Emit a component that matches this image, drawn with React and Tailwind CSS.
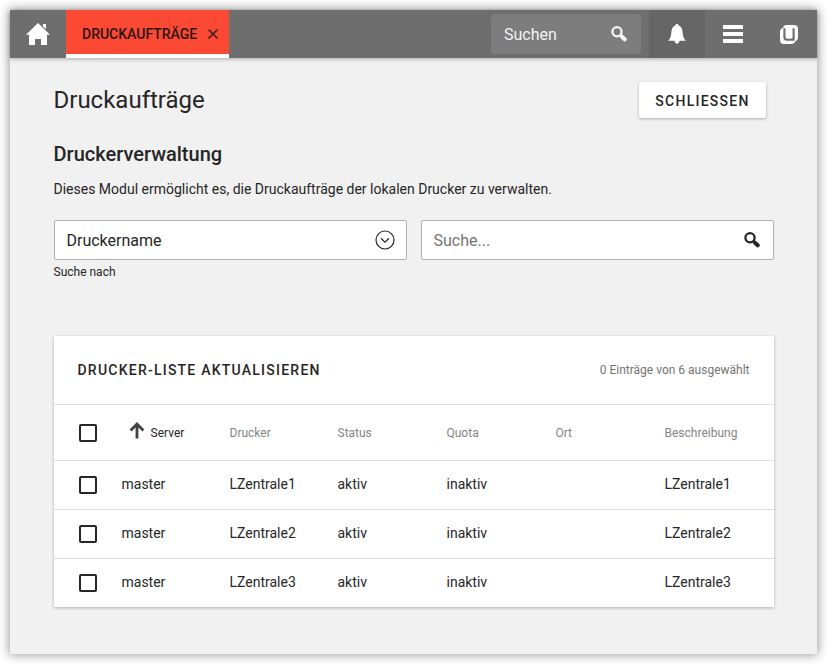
const font = "font-['Roboto','Liberation_Sans',sans-serif]";

function SearchIcon({ className }) {
  return (
    <svg viewBox="0 0 16 16" className={className} fill="none" stroke="currentColor">
      <circle cx="6" cy="5.8" r="4.6" strokeWidth="2.3" />
      <path d="M9.4 9.2 L11 10.6" strokeWidth="2.4" />
      <path d="M11 10.7 L13.7 13.3" strokeWidth="4" strokeLinecap="round" />
    </svg>
  );
}

function Checkbox() {
  return <span className="block h-[18px] w-[18px] rounded-[2px] border-2 border-[#262626]" />;
}

const columns = "grid grid-cols-[43px_108px_108px_109px_109px_109px_1fr] pl-[25px]";

function Header() {
  return (
    <header className="relative flex h-12 shrink-0 bg-[#6e6e6e] shadow-[0_1px_4px_rgba(0,0,0,0.3)]">
      <div className="flex w-14 justify-center pt-[13px]">
        <svg width="24" height="22" viewBox="0 0 24 22" fill="#fff">
          <path d="M12 0 L24 11.8 H21 V22 H15 V16 H9 V22 H3 V11.8 H0 Z M17 1 H20 V6.3 L17 3.4 Z" />
        </svg>
      </div>
      <div className="flex w-[163px] items-center border-b-4 border-white bg-[#fb4934] pl-4 pt-1">
        <span className="w-[125px] whitespace-nowrap text-sm font-medium leading-5 text-[#2b1511]">DRUCKAUFTRÄGE</span>
        <svg width="12" height="12" viewBox="0 0 12 12" stroke="#3a2421" strokeWidth="1.7">
          <path d="M1.5 1.5 L10.5 10.5 M10.5 1.5 L1.5 10.5" />
        </svg>
      </div>
      <div className="ml-auto mr-2 mt-1 flex h-10 w-[150px] items-center justify-between rounded-[3px] bg-[#7d7d7d] pl-[13px] pr-3.5 text-base text-[#f4f4f4]">
        <span className="pt-0.5">Suchen</span>
        <SearchIcon className="h-4 w-4" />
      </div>
      <div className="flex w-14 justify-center bg-[#666] pt-3.5">
        <svg width="18" height="20" viewBox="0 0 18 20" fill="#fff">
          <path d="M9 0 C10 0 10.4.6 10.6 1.4 C14 2.5 14.5 6 14.8 10 C15 13 16 15 18 16.8 H11.5 C11 19 10.3 19.7 9 19.7 C7.7 19.7 7 19 6.5 16.8 H0 C2 15 3 13 3.2 10 C3.5 6 4 2.5 7.4 1.4 C7.6.6 8 0 9 0 Z" />
        </svg>
      </div>
      <div className="flex w-14 flex-col items-center gap-[3px] pt-[15px]">
        <span className="h-1 w-5 bg-white" />
        <span className="h-1 w-5 bg-white" />
        <span className="h-1 w-5 bg-white" />
      </div>
      <div className="flex w-14 justify-center pt-[15px]">
        <svg width="18" height="19" viewBox="0 0 18 19">
          <path d="M6.5 0 H14 Q18 0 18 4 V12 Q18 15.5 15.5 16 Q14.5 19 11 19 H4 Q0 19 0 15 V7 Q0 3.5 3 3 Q3.5 0 6.5 0 Z" fill="#fff" />
          <path d="M4.4 3.2 V12 Q4.4 14.8 7.2 14.8 H13.6 V3.2" fill="none" stroke="#6e6e6e" strokeWidth="2.1" />
          <path d="M12.5 12 Q12.3 13.8 10.5 13.8 H12.5 Z" fill="#6e6e6e" />
        </svg>
      </div>
    </header>
  );
}

export default function App() {
  return (
    <div className={`${font} h-[664px] w-[827px] overflow-hidden bg-white p-2.5 text-[#262626]`}>
      <div className="flex h-[644px] w-[807px] flex-col bg-[#f1f1f1] shadow-[0_0_10px_1px_rgba(0,0,0,0.4)]">
        <Header />
        <main className="px-[43.5px] pt-6">
          <div className="flex h-9 items-center justify-between pr-[7.5px]">
            <h1 className="text-2xl font-normal">Druckaufträge</h1>
            <button className="h-9 w-[127px] rounded-[2px] bg-white pt-0.5 text-sm font-medium tracking-[1.25px] shadow-[0_1px_3px_rgba(0,0,0,0.3)]">SCHLIESSEN</button>
          </div>
          <h2 className="mt-[22px] text-xl font-medium leading-7">Druckerverwaltung</h2>
          <p className="mt-[11px] text-sm leading-5">Dieses Modul ermöglicht es, die Druckaufträge der lokalen Drucker zu verwalten.</p>
          <div className="mt-[21px] grid grid-cols-2 gap-3.5">
            <div className="flex h-10 items-center justify-between rounded-[2px] border border-[#b0b0b0] bg-white pl-3 pr-[11px] text-base">
              <span className="pt-0.5">Druckername</span>
              <svg width="20" height="20" viewBox="0 0 20 20" fill="none" stroke="#262626" strokeWidth="1.2">
                <circle cx="10" cy="10" r="9" />
                <path d="M6 8.3 L10 12.2 L14 8.3" />
              </svg>
            </div>
            <div className="flex h-10 items-center justify-between rounded-[2px] border border-[#b0b0b0] bg-white pl-3 pr-[13px] text-base text-[#757575]">
              <span className="pt-0.5">Suche...</span>
              <SearchIcon className="h-4 w-4 text-[#262626]" />
            </div>
          </div>
          <div className="mt-1 text-xs leading-4">Suche nach</div>
          <section className="mt-14 bg-white shadow-[0_1px_3px_rgba(0,0,0,0.28)]">
            <div className="flex h-[68px] items-center justify-between px-6">
              <span className="text-sm font-medium tracking-[1.23px]">DRUCKER-LISTE AKTUALISIEREN</span>
              <span className="text-xs text-[#757575]">0 Einträge von 6 ausgewählt</span>
            </div>
            <div className={`${columns} h-14 items-center border-t border-[#dedede] text-xs text-[#858585]`}>
              <Checkbox />
              <span className="flex items-center pl-[7px] text-[#262626]">
                <svg width="16" height="18" viewBox="0 0 16 18" className="mb-1 mr-1.5" fill="none" stroke="#424242" strokeWidth="2.8">
                  <path d="M8 16.5 V2 M1.6 8.4 L8 2 L14.4 8.4" />
                </svg>
                Server
              </span>
              <span>Drucker</span>
              <span>Status</span>
              <span>Quota</span>
              <span>Ort</span>
              <span>Beschreibung</span>
            </div>
            {["LZentrale1", "LZentrale2", "LZentrale3"].map((name) => (
              <div key={name} className={`${columns} h-[49px] border-t border-[#dedede] pt-[13px] text-sm leading-5`}>
                <span className="pt-0.5"><Checkbox /></span>
                <span>master</span>
                <span>{name}</span>
                <span>aktiv</span>
                <span>inaktiv</span>
                <span />
                <span>{name}</span>
              </div>
            ))}
          </section>
        </main>
      </div>
    </div>
  );
}
